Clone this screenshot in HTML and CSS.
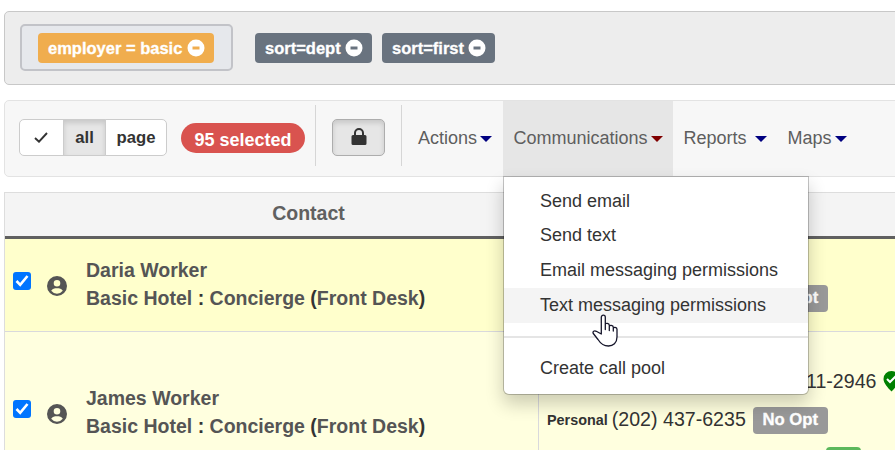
FILE: index.html
```html
<!DOCTYPE html>
<html lang="en">
<head>
<meta charset="utf-8">
<title>Contacts</title>
<link rel="stylesheet" href="styles.css">
</head>
<body>
<svg class="defs" width="0" height="0">
  <symbol id="minus" viewBox="0 0 18 18"><path fill="currentColor" fill-rule="evenodd" d="M9 .5a8.5 8.5 0 1 0 0 17a8.5 8.5 0 0 0 0-17ZM5.5 7.500h7v3h-7Z"/></symbol>
  <symbol id="person" viewBox="0 0 20 20"><path fill="currentColor" fill-rule="evenodd" d="M10 0a10 10 0 1 0 0 20a10 10 0 0 0 0-20ZM10 4a3.300 3.300 0 1 1 0 6.600a3.300 3.300 0 0 1 0-6.600ZM4.200 14.800c1.200-2.200 3.300-2.500 5.800-2.500s4.600.3 5.800 2.500a7.300 7.300 0 0 1-11.600 0Z"/></symbol>
</svg>
<section class="filters">
  <div class="filter-group"><span class="tag orange">employer = basic <svg><use href="#minus"/></svg></span></div>
  <span class="tag dept">sort=dept <svg><use href="#minus"/></svg></span>
  <span class="tag first">sort=first <svg><use href="#minus"/></svg></span>
</section>
<nav class="toolbar">
  <div class="btn-group">
    <button class="check"><svg width="14" height="11" viewBox="0 0 14 11"><path d="M1 6l4 3.700L13 1" fill="none" stroke="#333" stroke-width="1.900"/></svg></button>
    <button class="all">all</button>
    <button class="page">page</button>
  </div>
  <span class="pill">95 selected</span>
  <div class="lock-box">
    <button class="lock"><svg width="16" height="18" viewBox="0 0 16 18"><path fill="#333" fill-rule="evenodd" d="M3 7V5a5 5 0 0 1 10 0v2h1q1.500 0 1.500 1.500v7q0 1.500-1.500 1.500H2Q.5 17 .5 15.500v-7Q.5 7 2 7ZM5 7h6V5a3 3 0 0 0-6 0Z"/></svg></button>
  </div>
  <a class="menu actions">Actions<i class="caret"></i></a>
  <div class="menu comm open">Communications<i class="caret"></i>
    <div class="dropdown">
      <a>Send email</a>
      <a>Send text</a>
      <a>Email messaging permissions</a>
      <a class="hover">Text messaging permissions</a>
      <hr>
      <a>Create call pool</a>
    </div>
  </div>
  <a class="menu reports">Reports<i class="caret"></i></a>
  <a class="menu maps">Maps<i class="caret"></i></a>
</nav>
<main class="grid">
  <div class="head">Contact</div><div class="head"></div>
  <div class="cell odd contact">
    <span class="box"><svg viewBox="0 0 18 18"><path d="M3.500 9l3.700 3.900L14.500 4"/></svg></span>
    <svg class="person"><use href="#person"/></svg>
    <div class="who">Daria Worker<br>Basic Hotel <b>:</b> Concierge <b>(</b>Front Desk<b>)</b></div>
  </div>
  <div class="cell odd right first-row"><span class="badge">No Opt</span></div>
  <div class="cell even contact second">
    <span class="box"><svg viewBox="0 0 18 18"><path d="M3.500 9l3.700 3.900L14.500 4"/></svg></span>
    <svg class="person"><use href="#person"/></svg>
    <div class="who">James Worker<br>Basic Hotel <b>:</b> Concierge <b>(</b>Front Desk<b>)</b></div>
  </div>
  <div class="cell even right phones">
    <div class="line partial"><span class="num">11-2946</span><svg class="pin" width="17" height="21" viewBox="0 0 17 21"><path fill="#008000" d="M8.500 0A8 8 0 0 0 .5 8c0 4 4.500 9 8 12.500C12 17 16.500 12 16.500 8a8 8 0 0 0-8-8Z"/><path d="M4 8l3 3 6-6" fill="none" stroke="#fff" stroke-width="2"/></svg></div>
    <div class="line"><span class="kind">Personal</span><span class="num">(202) 437-6235</span><span class="badge">No Opt</span></div>
    <div class="line last"><span class="badge green"></span></div>
  </div>
</main>
<svg class="cursor" width="27" height="33" viewBox="0 0 27 33"><path fill="#fff" stroke="#15152a" stroke-width="1.300" stroke-linejoin="round" stroke-linecap="round" d="M9.300 20V3.300c0-2.800 4-2.800 4 0V15v-4.500c0-1.800 4-1.500 4 .8V16v-3.500c0-1.800 4-1.300 4 .8V17v-2.500c0-1.800 3.700-1.300 3.700.8V23c0 6-4 9-8.500 9-5 0-8-2.500-10.500-6.500L1.300 19.500c-1-2 1-3.200 3-2.200ZM13.300 11v4.500M17.300 12v4.500M21.300 13.500V17"/></svg>
</body>
</html>
```
FILE: styles.css
```css
* { box-sizing: border-box; }
body { margin: 0; width: 895px; height: 450px; overflow: hidden; background: #fff; color: #333; font: 18px/28px "Liberation Sans", Arial, sans-serif; }
.defs { position: absolute; }
.filters { margin: 11px 0 0 4px; width: 900px; height: 74px; border: 1px solid #c8c8c8; border-radius: 5px; background: #ededed; display: flex; align-items: flex-start; padding: 12px 0 0 15px; }
.filter-group { width: 213px; height: 47px; border: 2px solid #c2c3c8; border-radius: 5px; background: #e6e8ec; padding: 7px 16px; margin-right: 22px; }
.tag { display: flex; align-items: center; justify-content: space-between; height: 30px; padding: 0 9px 0 10px; border-radius: 4px; background: #69737f; color: #fff; font-weight: bold; font-size: 16.500px; -webkit-text-stroke: .3px #fff; white-space: nowrap; margin-top: 9px; }
.tag svg { width: 18px; height: 18px; flex: none; margin-top: -1px; }
.orange { width: 176px; background: #f0ad4e; margin-top: 0; }
.dept { width: 117px; margin-right: 10px; }
.first { width: 113px; }
.toolbar { margin: 15px 0 0 4px; width: 900px; height: 77px; border: 1px solid #e3e3e3; border-radius: 5px; background: #f7f7f7; display: flex; }
button { font: bold 16.700px/20px "Liberation Sans", Arial, sans-serif; color: #333; display: flex; align-items: center; justify-content: center; padding: 0; background: #fff; border: 1px solid #ccc; }
.btn-group { display: flex; height: 37px; margin: 18px 0 0 14px; }
.check { width: 45px; border-radius: 5px 0 0 5px; padding-right: 2px; }
.all { width: 43px; margin-left: -1px; background: #e6e6e6; box-shadow: inset 0 3px 5px rgba(0,0,0,.13); }
.page { width: 62px; margin-left: -1px; border-radius: 0 5px 5px 0; }
.pill { width: 124px; height: 30px; margin: 22px 0 0 14px; border-radius: 15px; background: #d9534f; color: #fff; font-weight: bold; line-height: 34px; text-align: center; }
.lock-box { width: 87px; height: 61px; margin: 4px 0 0 10px; padding: 14px 16px; border: solid #d6d6d6; border-width: 0 1px; }
.lock { width: 53px; height: 37px; padding-bottom: 2px; background: #e6e6e6; border-color: #adadad; border-radius: 5px; box-shadow: inset 0 3px 5px rgba(0,0,0,.13); }
.menu { height: 75px; padding-bottom: 1px; display: flex; align-items: center; color: #5e5e5e; }
.caret { border: solid transparent; border-width: 6px 6px 0; border-top-color: #000080; position: relative; top: 1px; }
.actions { width: 101px; padding-left: 16px; }
.actions .caret { margin-left: 3px; }
.comm { position: relative; width: 170px; padding-left: 10.500px; }
.open { background: #e6e6e6; }
.open .caret { border-top-color: #800000; margin-left: 3px; }
.reports { width: 104px; padding-left: 10.500px; }
.reports .caret { margin-left: 8px; }
.maps { padding-left: 10.500px; }
.maps .caret { margin-left: 3px; }
.dropdown { position: absolute; z-index: 2; left: 0; top: 75px; width: 306px; height: 219px; padding: 7px 0; background: #fff; border: 1px solid rgba(0,0,0,.22); border-radius: 0 0 6px 6px; background-clip: padding-box; box-shadow: 0 9px 18px rgba(0,0,0,.2); }
.dropdown a { display: block; height: 34.700px; line-height: 34px; padding-left: 36px; color: #333; white-space: nowrap; }
.dropdown a:nth-child(2) { line-height: 33px; }
.dropdown .hover { background: #f4f4f4; }
.dropdown hr { height: 2px; margin: 13px 0; border: 0; background: #e5e5e5; }
.grid { margin: 15px 0 0 4px; width: 900px; height: 258px; overflow: hidden; display: grid; grid-template-columns: 534px 366px; grid-template-rows: 47px 93px 118px; border-left: 1px solid #ddd; }
.head { border: solid #ddd; border-width: 1px 1px 3px 0; border-bottom-color: #606060; background: #f4f4f4; color: #606060; font-size: 19.500px; font-weight: bold; line-height: 41px; text-align: center; padding-left: 74px; }
.cell { border: solid #d9d9dc; border-width: 0 1px 1px 0; }
.odd { background: #ffffcc; }
.even { background: #ffffdf; border-bottom: 0; }
.contact { display: flex; padding: 17px 0 0 8px; color: #555; }
.second { padding-top: 52px; }
.box { width: 18px; height: 18px; margin-top: 16px; border-radius: 3px; background: #0075ff; display: flex; }
.box path { fill: none; stroke: #fff; stroke-width: 2.600px; }
.person { width: 20px; height: 20px; margin: 20px 0 0 16px; }
.who { margin-left: 19px; font-weight: bold; font-size: 19.500px; white-space: nowrap; }
.who b { color: #333; }
.badge { display: block; width: 75px; height: 27px; border-radius: 4px; background: #999; color: #fff; font-weight: bold; font-size: 16.700px; line-height: 26px; text-align: center; -webkit-text-stroke: .3px #fff; }
.first-row { padding: 46px 0 0 214px; }
.phones { padding: 30px 0 0 8px; }
.line { display: flex; align-items: center; height: 38px; }
.partial { padding-left: 259px; }
.kind { font-size: 14.400px; font-weight: bold; margin: 2px 4px 0 0; }
.num { font-size: 19.600px; white-space: nowrap; margin-top: -1px; }
.line .badge { margin: 2px 0 0 7px; }
.pin { margin-left: 7px; }
.last { padding-left: 272px; }
.last .green { width: 35px; margin-top: 6px; background: #5cb85c; }
.cursor { position: absolute; z-index: 3; left: 592px; top: 314px; }
```
